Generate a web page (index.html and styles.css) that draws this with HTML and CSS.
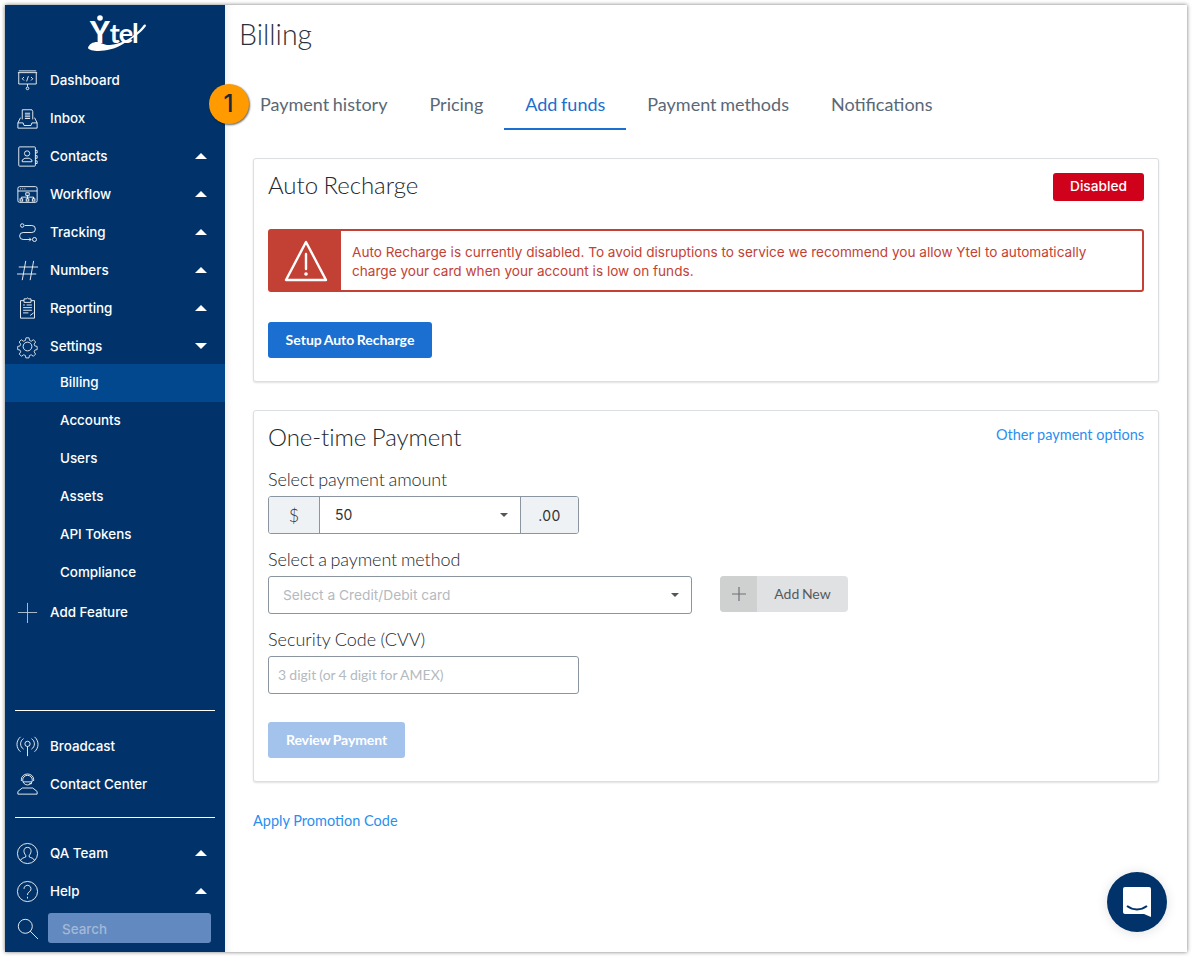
FILE: index.html
```html
<!DOCTYPE html>
<html lang="en">
<head>
<meta charset="utf-8">
<title>Billing</title>
<link rel="stylesheet" href="styles.css">
</head>
<body>
<div class="window">
  <aside class="sidebar">
    <div class="logo">
      <svg width="60" height="40" viewBox="0 0 60 40"><path d="M1 34C3 38 22 39 36 30C46 24 54 19 59 12C59 10 57 10 56 12C48 22 36 30 23 31C17 31.500 13 28 10 28C6 28 2 30 1 34Z" fill="#fff"/><circle cx="13" cy="4" r="2.800" fill="#fff"/><text x="3" y="29" class="logo-text"><tspan class="logo-y">Y</tspan><tspan class="logo-rest">tel</tspan></text></svg>
    </div>
    <nav class="nav">
      <a class="row"><svg class="ic" viewBox="0 0 24 24"><path d="M1 3h22M2 3v13h20V3M2 1h20M12 16v3"/><circle cx="12" cy="21" r="1.500"/><path d="M8 8l-2 2 2 2M16 8l2 2-2 2M13 7l-2 6"/></svg><span class="lbl">Dashboard</span></a>
      <a class="row"><svg class="ic" viewBox="0 0 24 24"><path d="M6 13V2h11l1 2v9M9 6h6M9 8h6M9 10h6M9 12h6M4 11l-3 6v6h22v-6l-3-6M1 17h6l1 3h8l1-3h6"/></svg><span class="lbl">Inbox</span></a>
      <a class="row"><svg class="ic" viewBox="0 0 24 24"><path d="M3 1h17a1 1 0 0 1 1 1v20a1 1 0 0 1-1 1H3a1 1 0 0 1-1-1V2a1 1 0 0 1 1-1zM21 5h2v3h-2M21 11h2v3h-2M21 17h2v3h-2"/><circle cx="11.500" cy="8.500" r="3"/><path d="M6 18v-2l3-2h5l3 2v2z"/></svg><span class="lbl">Contacts</span><i class="caret up"></i></a>
      <a class="row"><svg class="ic" viewBox="0 0 24 24"><rect x="1" y="3" width="22" height="18" rx="2"/><path d="M1 8h22M3.500 5.500h1M6 5.500h1M8.500 5.500h1M10 10h4v3h-4zM12 13v2M5 15h14v2M5 15v2M19 15v2M12 15v2"/><rect x="3.500" y="17" width="3" height="2.500"/><rect x="10.500" y="17" width="3" height="2.500"/><rect x="17.500" y="17" width="3" height="2.500"/></svg><span class="lbl">Workflow</span><i class="caret up"></i></a>
      <a class="row"><svg class="ic" viewBox="0 0 24 24"><circle cx="6" cy="4" r="2"/><path d="M9 4h8a3.500 3.500 0 0 1 0 8H7a3.500 3.500 0 0 0 0 8h9M14 18l2 2-2 2"/><circle cx="20" cy="20" r="2.300"/></svg><span class="lbl">Tracking</span><i class="caret up"></i></a>
      <a class="row"><svg class="ic" viewBox="0 0 24 24"><path d="M10 1L6 23M19 1l-4 22M2 8h22M0 16h22"/></svg><span class="lbl">Numbers</span><i class="caret up"></i></a>
      <a class="row"><svg class="ic" viewBox="0 0 24 24"><path d="M8 3H4v20h16V3h-4M8 1h2.500l1.500-1 1.500 1H16v4H8zM7 8h2M11 8h6M7 11h10M7 14h10M7 17h6M15 20l4-3"/></svg><span class="lbl">Reporting</span><i class="caret up"></i></a>
      <a class="row"><svg class="ic" viewBox="0 0 24 24"><circle cx="12" cy="12" r="5"/><path d="M10 1h4l.6 3.300 2.200 1 2.800-1.900 2.700 2.900-1.900 2.700.9 2.300 3 .7v3.900l-3 .7-.9 2.200 1.900 2.800-2.800 2.800-2.800-1.900-2.200.9-.6 3.100h-4l-.6-3.100-2.200-.9-2.800 1.900-2.800-2.800 1.900-2.800-.9-2.200-3-.7v-3.900l3-.7.9-2.300L1.400 6.300l2.700-2.900 2.800 1.900 2.500-1z" transform="translate(1.200 1.200) scale(.9)"/></svg><span class="lbl">Settings</span><i class="caret down"></i></a>
      <div class="sub">
        <a class="sub-row active">Billing</a>
        <a class="sub-row">Accounts</a>
        <a class="sub-row">Users</a>
        <a class="sub-row">Assets</a>
        <a class="sub-row">API Tokens</a>
        <a class="sub-row">Compliance</a>
      </div>
      <a class="row add"><svg class="ic" viewBox="0 0 24 24"><path d="M12 1v23M1 12h22"/></svg><span class="lbl">Add Feature</span></a>
    </nav>
    <div class="grow"></div>
    <div class="group first">
      <a class="row"><svg class="ic" viewBox="0 0 24 24"><circle cx="12" cy="9" r="3"/><path d="M12 12v11M7.500 15a7 7 0 0 1 0-12M16.500 3a7 7 0 0 1 0 12M4 18A11 11 0 0 1 4 1M20 1a11 11 0 0 1 0 17"/></svg><span class="lbl">Broadcast</span></a>
      <a class="row"><svg class="ic" viewBox="0 0 24 24"><circle cx="12" cy="7" r="5.500"/><path d="M5 8V6a7 6 0 0 1 14 0v2M17 11h-3M7 9h10M1 23v-3l5-4h12l5 4v3z"/></svg><span class="lbl">Contact Center</span></a>
    </div>
    <div class="group second">
      <a class="row"><svg class="ic" viewBox="0 0 24 24"><circle cx="12" cy="12" r="11.500"/><path d="M4 20c1-3 4-3 6-4v-2c-3-3-3-9 2-9s5 6 2 9v2c2 1 5 1 6 4"/></svg><span class="lbl">QA Team</span><i class="caret up"></i></a>
      <a class="row"><svg class="ic" viewBox="0 0 24 24"><circle cx="12" cy="12" r="11.500"/><path d="M8 9a4 4 0 1 1 6.500 3c-1.500 1-2.500 2-2.500 4M12 18v2"/></svg><span class="lbl">Help</span><i class="caret up"></i></a>
    </div>
    <div class="search">
      <svg class="ic search-ic" viewBox="0 0 24 24"><circle cx="9.500" cy="9.500" r="8"/><path d="M15 15l9 9"/></svg>
      <div class="search-box">Search</div>
    </div>
  </aside>

  <main class="main">
    <h1 class="title">Billing</h1>
    <div class="tabs">
      <a class="tab">Payment history</a>
      <a class="tab">Pricing</a>
      <a class="tab current">Add funds</a>
      <a class="tab">Payment methods</a>
      <a class="tab">Notifications</a>
    </div>

    <section class="card recharge">
      <div class="card-head">
        <h2 class="card-title">Auto Recharge</h2>
        <span class="badge-off">Disabled</span>
      </div>
      <div class="alert">
        <div class="alert-ic">
          <svg width="44" height="42" viewBox="0 0 44 42"><path d="M22 2L2 40h40z" fill="none" stroke="#fff" stroke-width="2.400" stroke-linejoin="round"/><path d="M22 14v15" stroke="#fff" stroke-width="2.400" stroke-linecap="round"/><circle cx="22" cy="34" r="1.800" fill="#fff"/></svg>
        </div>
        <p class="alert-text">Auto Recharge is currently disabled. To avoid disruptions to service we recommend you allow Ytel to automatically charge your card when your account is low on funds.</p>
      </div>
      <button class="btn-primary">Setup Auto Recharge</button>
    </section>

    <section class="card payment">
      <div class="card-head">
        <h2 class="card-title">One-time Payment</h2>
        <a class="link other">Other payment options</a>
      </div>
      <label class="field-label first-label">Select payment amount</label>
      <div class="amount">
        <span class="addon dollar">$</span>
        <span class="amount-select">50<i class="mini-caret"></i></span>
        <span class="addon cents">.00</span>
      </div>
      <label class="field-label">Select a payment method</label>
      <div class="method-row">
        <div class="select">Select a Credit/Debit card<i class="mini-caret"></i></div>
        <div class="add-new">
          <span class="add-plus"><svg width="14" height="14" viewBox="0 0 14 14"><path d="M7 0v14M0 7h14" stroke="#6f7275" stroke-width="1.200"/></svg></span>
          <span class="add-label">Add New</span>
        </div>
      </div>
      <label class="field-label cvv-label">Security Code (CVV)</label>
      <div class="cvv">3 digit (or 4 digit for AMEX)</div>
      <button class="btn-primary disabled">Review Payment</button>
    </section>

    <a class="link promo">Apply Promotion Code</a>
  </main>

  <div class="step">1</div>
  <div class="chat">
    <svg width="30" height="32" viewBox="0 0 30 32"><path d="M3 1h24a2 2 0 0 1 2 2v28l-7-3H3a2 2 0 0 1-2-2V3a2 2 0 0 1 2-2z" fill="#fff"/><path d="M5 20c6 4.500 14 4.500 20 0" fill="none" stroke="#01336a" stroke-width="2"/></svg>
  </div>
</div>
</body>
</html>
```

FILE: styles.css
```css
* { box-sizing: border-box; }
html, body { margin: 0; height: 100%; background: #fff; }
body { padding: 5px; overflow: hidden; }
a { display: block; }
.window {
  position: relative;
  display: flex;
  width: 1182px;
  height: 947px;
  background: #fff;
  box-shadow: 0 0 4px rgba(0,0,0,.55);
  font-family: Inter, "Liberation Sans", sans-serif;
}
.sidebar {
  width: 220px;
  flex: none;
  display: flex;
  flex-direction: column;
  background: #01336a;
  color: #fff;
  padding-bottom: 9px;
}
.logo { height: 56px; display: flex; justify-content: center; padding: 9px 0 0 4px; }
.logo svg { overflow: visible; }
.logo-text { font-family: Lato, sans-serif; fill: #fff; }
.logo-y { font-size: 30px; font-weight: 900; }
.logo-rest { font-size: 27px; font-weight: 700; letter-spacing: -1px; }
.row {
  height: 38px;
  display: flex;
  align-items: center;
  padding-left: 12px;
  padding-right: 18px;
  font-size: 13.400px;
  font-weight: 500;
  color: #fff;
}
.ic {
  width: 21px;
  height: 21px;
  flex: none;
  fill: none;
  stroke: #fff;
  stroke-width: 1;
  overflow: visible;
}
.lbl { margin-left: 12px; flex: 1; padding-bottom: 1px; }
.caret { width: 0; height: 0; border-left: 6px solid transparent; border-right: 6px solid transparent; }
.caret.up { border-bottom: 6px solid #fff; }
.caret.down { border-top: 6px solid #fff; }
.sub { margin-bottom: 1px; margin-top: -1px; }
.sub-row {
  height: 38px;
  line-height: 36px;
  padding-left: 55px;
  font-size: 13.400px;
  font-weight: 500;
}
.sub-row.active { background: #02488f; }
.add .ic { opacity: .75; }
.grow { flex: 1; }
.group { margin: 0 10px; border-top: 1px solid #fff; }
.group .row { padding-left: 2px; padding-right: 8px; }
.group.first { padding: 16px 0 14px; }
.group.second { padding-top: 16px; }
.search { display: flex; align-items: center; padding: 3px 14px 0 12px; }
.search-ic { width: 21px; height: 21px; }
.search-box {
  margin-left: 10px;
  flex: 1;
  height: 30px;
  line-height: 32px;
  padding-left: 14px;
  border-radius: 3px;
  background: #628ac0;
  color: #a4b9d6;
  font-size: 13.400px;
  font-weight: 500;
}

.main { flex: 1; min-width: 0; padding: 0 28px; box-shadow: inset 6px 0 8px -6px rgba(0,0,0,.12); }
.title {
  margin: 0 0 0 -14px;
  padding-top: 11px;
  height: 60px;
  font: 300 28.500px/36px Lato, sans-serif;
  color: #2b3138;
}
.tabs { display: flex; margin-left: -14px; height: 65px; }
.tab {
  height: 65px;
  padding: 25px 21px 0;
  font: 400 18px/28px Lato, sans-serif;
  word-spacing: -1px;
  color: #5a6876;
  border-bottom: 2px solid transparent;
}
.tab.current { color: #1a6fd0; border-bottom-color: #1a6fd0; }

.card {
  width: 906px;
  background: #fff;
  border: 1px solid #dcdfe2;
  border-radius: 3px;
  box-shadow: 0 1px 2px rgba(0,0,0,.12);
  padding: 0 14px;
}
.recharge { margin-top: 28px; height: 224px; }
.payment { margin-top: 28px; height: 372px; }
.card-head { display: flex; justify-content: space-between; align-items: flex-start; height: 70px; padding-top: 9px; }
.card-title { margin: 0; font: 300 24px/34px Lato, sans-serif; letter-spacing: -.05px; word-spacing: -1px; color: #23282e; }
.badge-off {
  margin-top: 5px;
  width: 91px;
  height: 28px;
  text-align: center;
  background: #d0021b;
  color: #fff;
  border-radius: 3px;
  font: 500 13.700px/27px Inter, sans-serif;
}
.alert {
  display: flex;
  height: 63px;
  border: 2px solid #c34134;
  border-radius: 3px;
}
.alert-ic {
  width: 71px;
  flex: none;
  background: #c34134;
  display: flex;
  align-items: center;
  justify-content: center;
}
.alert-text {
  margin: 0;
  padding: 12px 40px 0 11px;
  font-size: 13.600px;
  line-height: 19px;
  color: #c34134;
}
.btn-primary {
  display: block;
  width: 164px;
  margin-top: 30px;
  height: 36px;
  padding: 0 0 2px;
  border: 0;
  border-radius: 3px;
  background: #1a6fd0;
  color: #fff;
  font: 700 14px Lato, sans-serif;
  word-spacing: -1px;
}
.btn-primary.disabled { width: 137px; background: #a3c3ed; margin-top: 28px; letter-spacing: -.1px; }
.link { color: #2a8ff0; font: 400 14.500px/20px Lato, sans-serif; }
.other { margin-top: 5px; }
.field-label {
  display: block;
  margin: 14px 0 0;
  height: 22px;
  font: 300 18px/22px Lato, sans-serif;
  letter-spacing: -.1px;
  word-spacing: -1px;
  color: #23282e;
}
.first-label { margin-top: -13px; }
.cvv-label { letter-spacing: 0; word-spacing: -.5px; }
.amount {
  display: flex;
  margin-top: 6px;
  width: 311px;
  height: 38px;
  border: 1px solid #8b95a0;
  border-radius: 3px;
  font-size: 14px;
  color: #333;
}
.addon { background: #eff2f5; display: flex; align-items: center; justify-content: center; flex: none; }
.dollar { width: 51px; font: 300 18px Lato, sans-serif; border-right: 1px solid #8b95a0; border-radius: 2px 0 0 2px; }
.cents { width: 58px; border-left: 1px solid #8b95a0; border-radius: 0 2px 2px 0; letter-spacing: .4px; }
.amount-select { position: relative; flex: 1; padding-left: 15px; line-height: 36px; font-weight: 400; }
.mini-caret { position: absolute; right: 12px; top: 50%; margin-top: -2px; width: 0; height: 0; border-left: 4px solid transparent; border-right: 4px solid transparent; border-top: 4px solid #555; }
.method-row { display: flex; margin-top: 6px; gap: 28px; }
.select {
  position: relative;
  width: 424px;
  height: 38px;
  padding-left: 14px;
  line-height: 36px;
  border: 1px solid #8b95a0;
  border-radius: 3px;
  font-size: 13.750px;
  color: #b4bac0;
}
.add-new { display: flex; width: 128px; height: 36px; border-radius: 4px; overflow: hidden; background: #e0e1e2; }
.add-plus { width: 37px; background: #cfd1d1; display: flex; align-items: center; justify-content: center; }
.add-label { flex: 1; text-align: center; font: 400 14px/35px Lato, sans-serif; word-spacing: -1px; color: #555a5f; }
.cvv {
  margin-top: 6px;
  width: 311px;
  height: 38px;
  padding-left: 9px;
  border: 1px solid #8b95a0;
  border-radius: 3px;
  font: 400 14px/36px Lato, sans-serif;
  word-spacing: -.4px;
  color: #b4bac0;
}
.promo { margin-top: 29px; }

.step {
  position: absolute;
  left: 204px;
  top: 79px;
  width: 40px;
  height: 40px;
  padding-right: 1px;
  border-radius: 50%;
  background: #ff9a00;
  box-shadow: 1px 1px 2px rgba(0,0,0,.6);
  color: #1c2a33;
  font: 500 24px/40px Inter, sans-serif;
  text-align: center;
}
.chat {
  position: absolute;
  right: 20px;
  bottom: 20px;
  width: 60px;
  height: 60px;
  border-radius: 50%;
  background: #01336a;
  box-shadow: 0 1px 12px rgba(0,0,0,.12);
  display: flex;
  align-items: center;
  justify-content: center;
}
```
